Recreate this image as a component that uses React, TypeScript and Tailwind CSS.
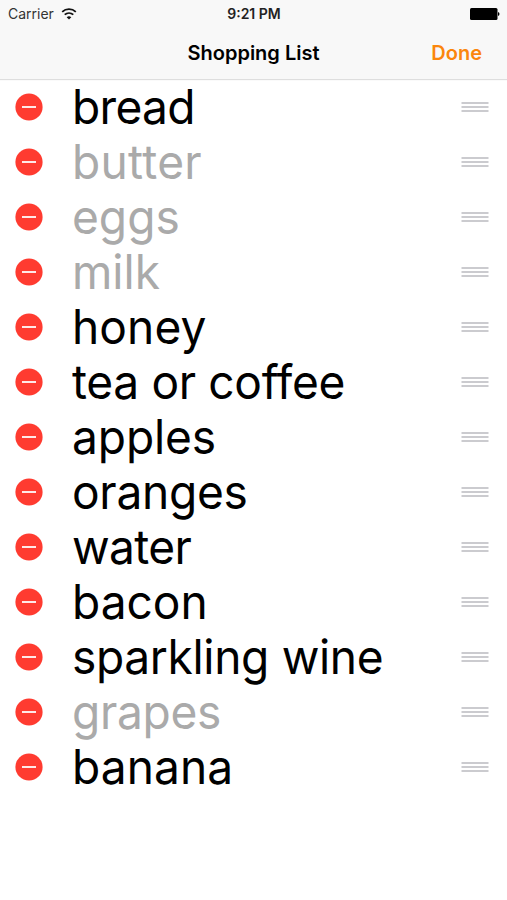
import clsx from 'clsx'

interface Item {
  name: string
  tracking: string
  done?: boolean
}

const items: Item[] = [
  { name: 'bread', tracking: 'tracking-[-0.7px]' },
  { name: 'butter', tracking: 'tracking-[0.3px]', done: true },
  { name: 'eggs', tracking: 'tracking-[0px]', done: true },
  { name: 'milk', tracking: 'tracking-[0px]', done: true },
  { name: 'honey', tracking: 'tracking-[0.1px]' },
  { name: 'tea or coffee', tracking: 'tracking-[-0.35px]' },
  { name: 'apples', tracking: 'tracking-[-0.1px]' },
  { name: 'oranges', tracking: 'tracking-[-0.3px]' },
  { name: 'water', tracking: 'tracking-[-0.7px]' },
  { name: 'bacon', tracking: 'tracking-[0px]' },
  { name: 'sparkling wine', tracking: 'tracking-[-0.35px]' },
  { name: 'grapes', tracking: 'tracking-[-0.3px]', done: true },
  { name: 'banana', tracking: 'tracking-[0.1px]' },
]

function StatusBar() {
  return (
    <div className="grid h-[27px] grid-cols-3 items-center pl-2 pr-[7px]">
      <div className="flex items-center gap-[7px] text-[14px] text-[#333]">
        <span>Carrier</span>
        <svg width="16" height="12" viewBox="0 0 16 12" fill="none" stroke="#111" strokeWidth="1.8">
          <path d="M1.2 3.8a10 10 0 0 1 13.6 0" />
          <path d="M3.7 6.7a6.4 6.4 0 0 1 8.6 0" />
          <path d="M8 11.6 5.7 9.2a3.4 3.4 0 0 1 4.6 0z" fill="#111" stroke="none" />
        </svg>
      </div>
      <div className="text-center text-[14px] font-semibold text-[#222]">9:21 PM</div>
      <svg className="justify-self-end" width="30" height="12" viewBox="0 0 30 12">
        <rect width="27.5" height="12" rx="1.5" />
        <path d="M28 4v4q1.5-.5 1.5-2T28 4z" />
      </svg>
    </div>
  )
}

function Row({ item }: { item: Item }) {
  return (
    <li className="flex h-[55px] items-center pl-[15px] pr-[18px]">
      <svg className="shrink-0" width="28" height="28" viewBox="0 0 28 28">
        <circle cx="14" cy="14" r="13.6" fill="#ff3b30" />
        <path d="M7 14h14" stroke="#ffe9e7" strokeWidth="2" />
      </svg>
      <span
        className={clsx(
          'ml-[29px] flex-1 origin-left scale-x-[0.96] whitespace-nowrap text-[48px] leading-[55px]',
          item.tracking,
          item.done ? 'text-[#aaa]' : 'text-black',
        )}
      >
        {item.name}
      </span>
      <svg width="28" height="12" viewBox="0 0 28 12" stroke="#cbcbcf" strokeWidth="1.8">
        <path d="M.5 2h27M.5 6h27M.5 10h27" />
      </svg>
    </li>
  )
}

export default function App() {
  return (
    <div className="min-h-[900px] bg-white font-['Inter',sans-serif] text-black">
      <header className="h-[79px] bg-[#f8f8f8] shadow-[0_1px_1px_#dedede]">
        <StatusBar />
        <div className="grid h-[51px] grid-cols-[1fr_auto_1fr] items-center px-[25px]">
          <span />
          <h1 className="text-[20px] font-semibold">Shopping List</h1>
          <button className="justify-self-end text-[20px] font-semibold text-[#fb860c]">Done</button>
        </div>
      </header>
      <ul>
        {items.map((item) => (
          <Row key={item.name} item={item} />
        ))}
      </ul>
    </div>
  )
}
